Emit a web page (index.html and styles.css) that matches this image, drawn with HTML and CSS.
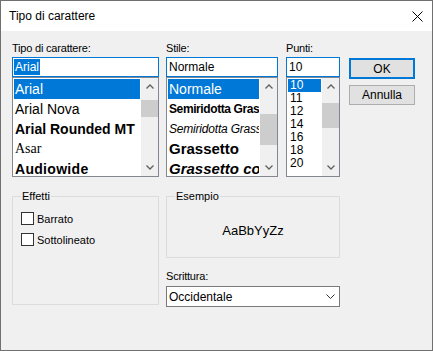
FILE: index.html
```html
<!DOCTYPE html>
<html lang="it">
<head>
    <meta charset="UTF-8">
    <meta name="viewport" content="width=device-width, initial-scale=1.0">
    <title>Tipo di carattere</title>
    <link rel="stylesheet" href="styles.css">
</head>
<body>
    <div class="window">
        <div class="titlebar">
            <span class="title">Tipo di carattere</span>
            <svg class="close" width="11" height="11" viewBox="0 0 11 11">
                <path d="M0.5 0.5 L10.5 10.5 M10.5 0.5 L0.5 10.5" stroke="#000" stroke-width="1" fill="none"/>
            </svg>
        </div>

        <div class="content">
            <div class="top-row">
                <!-- Tipo di carattere -->
                <div class="col col-font">
                    <label class="field-label">Tipo di carattere:</label>
                    <div class="input"><span class="sel-text">Arial</span></div>
                    <div class="listbox">
                        <ul class="items">
                            <li class="selected">Arial</li>
                            <li>Arial Nova</li>
                            <li class="f-rounded">Arial Rounded MT</li>
                            <li class="f-serif">Asar</li>
                            <li class="f-wide">Audiowide</li>
                        </ul>
                        <div class="scrollbar">
                            <div class="arrow"><svg width="8" height="5" viewBox="0 0 8 5"><polyline points="0.5,4.5 4,1 7.5,4.5" fill="none" stroke="#606060" stroke-width="1.3"/></svg></div>
                            <div class="track"><div class="thumb thumb-font"></div></div>
                            <div class="arrow"><svg width="8" height="5" viewBox="0 0 8 5"><polyline points="0.5,0.5 4,4 7.5,0.5" fill="none" stroke="#606060" stroke-width="1.3"/></svg></div>
                        </div>
                    </div>
                </div>

                <!-- Stile -->
                <div class="col col-style">
                    <label class="field-label">Stile:</label>
                    <div class="input">Normale</div>
                    <div class="listbox">
                        <ul class="items">
                            <li class="selected">Normale</li>
                            <li class="s-semibold">Semiridotta Grassetto</li>
                            <li class="s-semiitalic">Semiridotta Grassetto Corsivo</li>
                            <li class="s-bold">Grassetto</li>
                            <li class="s-bolditalic">Grassetto corsivo</li>
                        </ul>
                        <div class="scrollbar">
                            <div class="arrow"><svg width="8" height="5" viewBox="0 0 8 5"><polyline points="0.5,4.5 4,1 7.5,4.5" fill="none" stroke="#606060" stroke-width="1.3"/></svg></div>
                            <div class="track"><div class="thumb thumb-style"></div></div>
                            <div class="arrow"><svg width="8" height="5" viewBox="0 0 8 5"><polyline points="0.5,0.5 4,4 7.5,0.5" fill="none" stroke="#606060" stroke-width="1.3"/></svg></div>
                        </div>
                    </div>
                </div>

                <!-- Punti -->
                <div class="col col-size">
                    <label class="field-label">Punti:</label>
                    <div class="input">10</div>
                    <div class="listbox">
                        <ul class="items size-list">
                            <li class="selected">10</li>
                            <li>11</li>
                            <li>12</li>
                            <li>14</li>
                            <li>16</li>
                            <li>18</li>
                            <li>20</li>
                        </ul>
                        <div class="scrollbar">
                            <div class="arrow"><svg width="8" height="5" viewBox="0 0 8 5"><polyline points="0.5,4.5 4,1 7.5,4.5" fill="none" stroke="#606060" stroke-width="1.3"/></svg></div>
                            <div class="track"><div class="thumb thumb-size"></div></div>
                            <div class="arrow"><svg width="8" height="5" viewBox="0 0 8 5"><polyline points="0.5,0.5 4,4 7.5,0.5" fill="none" stroke="#606060" stroke-width="1.3"/></svg></div>
                        </div>
                    </div>
                </div>

                <div class="buttons">
                    <button class="btn btn-default">OK</button>
                    <button class="btn">Annulla</button>
                </div>
            </div>

            <div class="bottom-row">
                <fieldset class="group effects">
                    <legend>Effetti</legend>
                    <div class="check"><span class="box"></span>Barrato</div>
                    <div class="check"><span class="box"></span>Sottolineato</div>
                </fieldset>

                <div class="right-col">
                    <fieldset class="group sample">
                        <legend>Esempio</legend>
                        <div class="sample-text">AaBbYyZz</div>
                    </fieldset>
                    <label class="field-label script-label">Scrittura:</label>
                    <div class="select">
                        <span>Occidentale</span>
                        <svg width="9" height="5" viewBox="0 0 9 5"><polyline points="0.5,0.5 4.5,4.5 8.5,0.5" fill="none" stroke="#333" stroke-width="1"/></svg>
                    </div>
                </div>
            </div>
        </div>
    </div>
</body>
</html>
```

FILE: styles.css
```css
body {
    margin: 0;
    font-family: "Liberation Sans", Arial, sans-serif;
    font-size: 11px;
    color: #000;
    background: #fff;
}
.window {
    width: 433px;
    height: 351px;
    box-sizing: border-box;
    border: 1px solid #707070;
    background: #f0f0f0;
}
.titlebar {
    height: 30px;
    background: #fff;
    display: flex;
    align-items: center;
    justify-content: space-between;
    padding: 0 9px 0 8px;
}
.title {
    font-size: 12px;
}
.content {
    padding: 10px 0 0 11px;
}
.top-row {
    display: flex;
    align-items: flex-start;
}
.col-font {
    width: 147px;
}
.col-style {
    width: 112px;
    margin-left: 7px;
}
.col-size {
    width: 54px;
    margin-left: 8px;
}
.field-label {
    display: block;
    height: 14px;
    line-height: 14px;
    margin-bottom: 2px;
    letter-spacing: -0.2px;
}
.input {
    height: 20px;
    box-sizing: border-box;
    border: 1px solid #0078d7;
    background: #fff;
    font-size: 12px;
    line-height: 18px;
    padding-left: 2px;
}
.sel-text {
    display: inline-block;
    margin-left: -1px;
    padding: 0 1px;
    line-height: 16px;
    background: #0078d7;
    color: #fff;
}
.listbox {
    height: 100px;
    box-sizing: border-box;
    border: 1px solid #828790;
    background: #fff;
    display: flex;
}
.items {
    flex: 1;
    min-width: 0;
    list-style: none;
    margin: 0;
    padding: 1px;
    overflow: hidden;
}
.items li {
    height: 20px;
    line-height: 20px;
    padding-left: 1px;
    font-size: 14px;
    white-space: nowrap;
    overflow: hidden;
}
.items li.selected {
    background: #0078d7;
    color: #fff;
}
.f-rounded {
    font-weight: bold;
}
.f-serif {
    font-family: "Liberation Serif", serif;
    font-size: 15px;
}
.f-wide {
    font-weight: bold;
    font-size: 15px;
    letter-spacing: 0.3px;
}
.s-semibold {
    font-weight: bold;
    font-size: 12px !important;
    letter-spacing: -0.4px;
}
.s-semiitalic {
    font-style: italic;
    font-size: 12px !important;
    letter-spacing: -0.2px;
}
.s-bold {
    font-weight: bold;
    font-size: 15px !important;
}
.s-bolditalic {
    font-weight: bold;
    font-style: italic;
    font-size: 15px !important;
}
.size-list li {
    height: 13px;
    line-height: 13px;
    font-size: 12px;
    padding-left: 2px;
}
.scrollbar {
    width: 17px;
    background: #f0f0f0;
    display: flex;
    flex-direction: column;
}
.arrow {
    height: 17px;
    display: flex;
    align-items: center;
    justify-content: center;
}
.track {
    flex: 1;
}
.thumb {
    background: #cdcdcd;
}
.thumb-font {
    margin-top: 5px;
    height: 17px;
}
.thumb-style {
    margin-top: 19px;
    height: 31px;
}
.thumb-size {
    margin-top: 8px;
    height: 25px;
}
.buttons {
    width: 66px;
    margin-left: 9px;
    padding-top: 17px;
    display: flex;
    flex-direction: column;
    gap: 6px;
}
.btn {
    height: 20px;
    box-sizing: border-box;
    border: 1px solid #adadad;
    background: #e1e1e1;
    font-family: "Liberation Sans", Arial, sans-serif;
    font-size: 12px;
    color: #000;
    padding: 0;
}
.btn-default {
    height: 21px;
    border: 2px solid #0078d7;
}
.bottom-row {
    display: flex;
    align-items: flex-start;
    margin-top: 13px;
}
.group {
    margin: 0;
    padding: 0 8px;
    border: 1px solid #dcdcdc;
    min-width: 0;
    box-sizing: border-box;
}
.group legend {
    padding: 0 1px;
    line-height: 12px;
    font-size: 11px;
}
.effects {
    width: 147px;
    height: 115px;
    padding-top: 10px;
}
.check {
    display: flex;
    align-items: center;
    height: 13px;
    margin-bottom: 8px;
}
.box {
    width: 13px;
    height: 13px;
    box-sizing: border-box;
    border: 1px solid #333;
    background: #fff;
    margin-right: 3px;
}
.right-col {
    width: 174px;
    margin-left: 7px;
}
.sample {
    height: 68px;
}
.sample-text {
    padding-top: 4px;
    line-height: 50px;
    text-align: center;
    font-size: 13px;
}
.script-label {
    margin-top: 11px;
    margin-bottom: 3px;
}
.select {
    height: 21px;
    box-sizing: border-box;
    border: 1px solid #7a7a7a;
    background: #fff;
    display: flex;
    align-items: center;
    justify-content: space-between;
    padding: 0 4px 0 2px;
    font-size: 12px;
}
```
